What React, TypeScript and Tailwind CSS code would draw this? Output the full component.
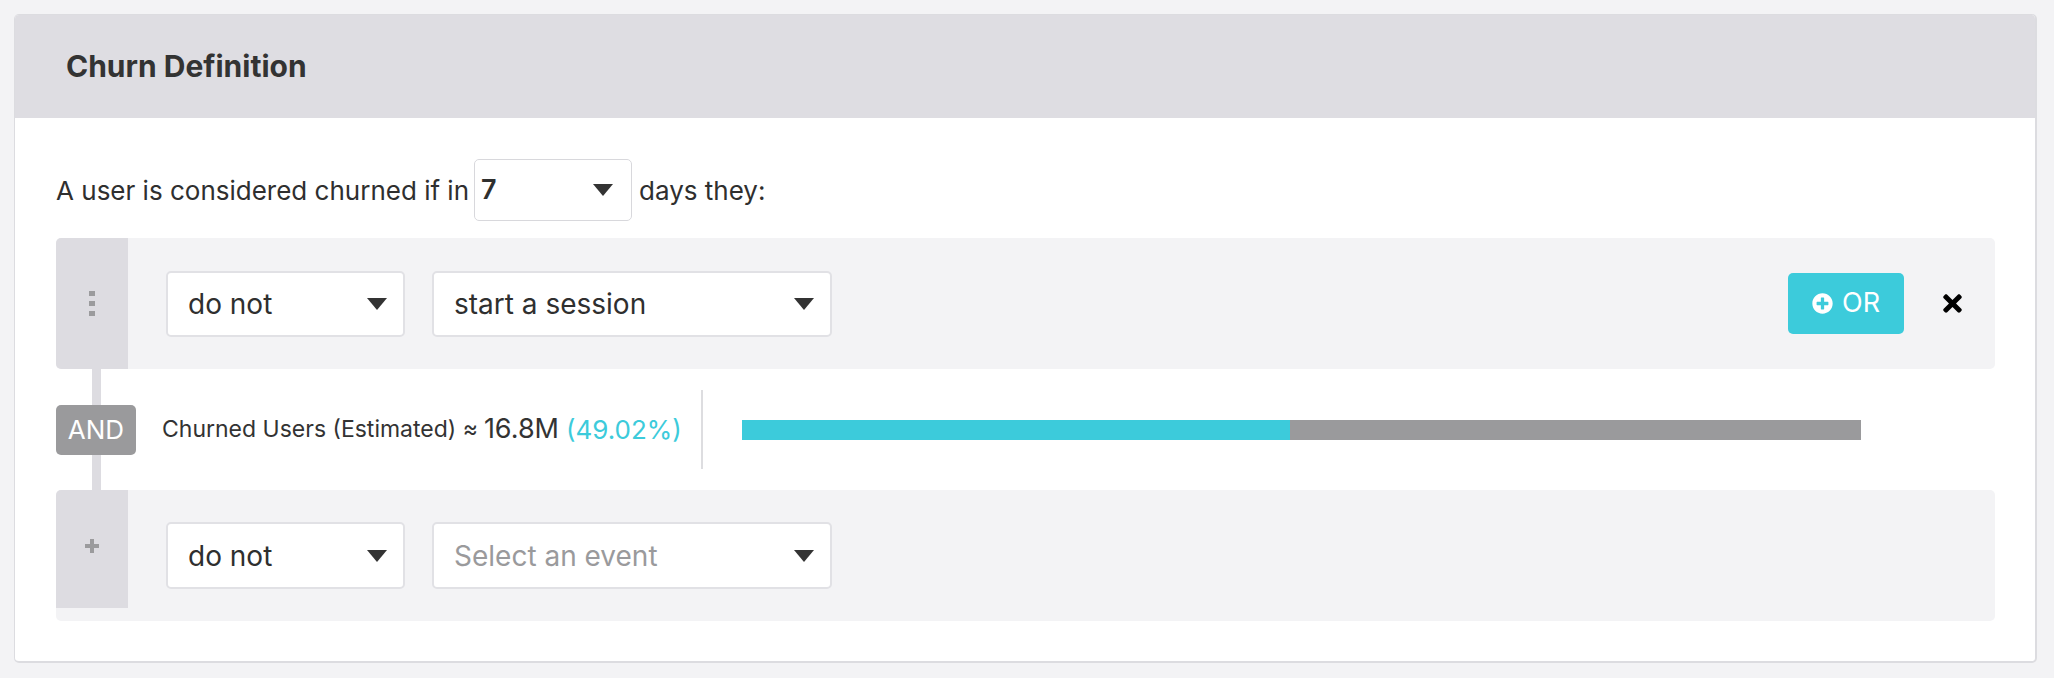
import React from 'react';
import { FaPlusCircle, FaTimes } from 'react-icons/fa';

const Caret = () => (
  <svg width="20" height="12" viewBox="0 0 20 12" className="shrink-0">
    <polygon points="0,0 20,0 10,12" fill="#333" />
  </svg>
);

interface SelectBoxProps {
  value: string;
  placeholder?: boolean;
  className?: string;
}

const SelectBox: React.FC<SelectBoxProps> = ({ value, placeholder, className }) => (
  <div
    className={
      'flex items-center justify-between rounded-[5px] border-2 border-[#e1e1e5] bg-white pl-[20px] pr-[16px] text-[28px] ' +
      (placeholder ? 'text-[#9a9a9c] ' : 'text-[#2f2f2f] ') +
      (className || '')
    }
  >
    <span>{value}</span>
    <Caret />
  </div>
);

const DragDots = () => (
  <div className="flex flex-col gap-[5px]">
    <span className="h-[5px] w-[6px] bg-[#9b9b9d]" />
    <span className="h-[5px] w-[6px] bg-[#9b9b9d]" />
    <span className="h-[5px] w-[6px] bg-[#9b9b9d]" />
  </div>
);

const PlusMark = () => (
  <svg width="14" height="14" viewBox="0 0 14 14">
    <rect x="5" y="0" width="4" height="14" fill="#9b9b9d" />
    <rect x="0" y="5" width="14" height="4" fill="#9b9b9d" />
  </svg>
);

export default function App() {
  return (
    <div className="min-h-screen bg-[#f3f3f5] pl-[14px] pr-[17px] pt-[14px] font-['Inter',sans-serif] text-[#2f2f2f]">
      <div className="overflow-hidden rounded-[5px] border border-r-2 border-b-2 border-[#dcdce0] bg-white">
        {/* header */}
        <div className="flex h-[103px] items-center bg-[#dedde2] pl-[51px]">
          <h1 className="text-[30px] font-bold text-[#333]">Churn Definition</h1>
        </div>

        {/* body */}
        <div className="pl-[41px] pr-[40px] pt-[41px] pb-[40px]">
          <div className="flex items-center text-[26px]">
            <span>A user is considered churned if in</span>
            <div className="ml-[5px] mr-[7px] flex h-[62px] w-[158px] items-center justify-between rounded-[5px] border border-[#d8d8dc] bg-white pl-[6px] pr-[18px]">
              <span className="text-[27px] font-semibold">7</span>
              <Caret />
            </div>
            <span>days they:</span>
          </div>

          {/* condition 1 */}
          <div className="mt-[17px] flex h-[131px] rounded-[5px] bg-[#f3f3f5]">
            <div className="flex w-[72px] items-center justify-center rounded-l-[5px] bg-[#dddce1]">
              <DragDots />
            </div>
            <div className="flex flex-1 items-center pl-[38px] pr-[29px]">
              <SelectBox value="do not" className="h-[66px] w-[239px]" />
              <SelectBox value="start a session" className="ml-[27px] h-[66px] w-[400px]" />
              <div className="flex-1" />
              <button className="flex h-[61px] w-[116px] items-center justify-center gap-[9px] rounded-[5px] bg-[#3ccbdb] text-[27px] text-white">
                <FaPlusCircle size={21} />
                <span>OR</span>
              </button>
              <FaTimes size={27} className="ml-[35px] text-black" />
            </div>
          </div>

          {/* AND row */}
          <div className="flex h-[121px] items-stretch">
            <div className="flex w-[80px] flex-col items-center">
              <div className="w-[9px] flex-1 bg-[#dddce1]" />
              <div className="flex h-[50px] w-[80px] items-center justify-center rounded-[5px] bg-[#9a9a9c] text-[26px] text-white">
                AND
              </div>
              <div className="w-[9px] flex-1 bg-[#dddce1]" />
            </div>
            <div className="flex items-center pl-[26px]">
              <span className="text-[23px] text-[#333]">Churned Users (Estimated) ≈</span>
              <span className="ml-[6px] text-[27px] text-[#333]">16.8M</span>
              <span className="ml-[7px] text-[26px] text-[#3ccbdb]">(49.02%)</span>
            </div>
            <div className="flex items-center">
              <div className="ml-[19px] h-[79px] w-[2px] bg-[#dddde0]" />
            </div>
            <div className="flex items-center pl-[39px]">
              <div className="flex h-[20px] w-[1119px] bg-[#9a9a9c]">
                <div className="h-full bg-[#3ccbdb]" style={{ width: '49.02%' }} />
              </div>
            </div>
          </div>

          {/* condition 2 */}
          <div className="flex h-[131px] items-start rounded-[5px] bg-[#f3f3f5]">
            <div className="flex h-[118px] w-[72px] items-center justify-center rounded-tl-[5px] bg-[#dddce1] pb-[6px]">
              <PlusMark />
            </div>
            <div className="flex h-full flex-1 items-center pl-[38px]">
              <SelectBox value="do not" className="h-[67px] w-[239px]" />
              <SelectBox value="Select an event" placeholder className="ml-[27px] h-[67px] w-[400px]" />
            </div>
          </div>
        </div>
      </div>
    </div>
  );
}
